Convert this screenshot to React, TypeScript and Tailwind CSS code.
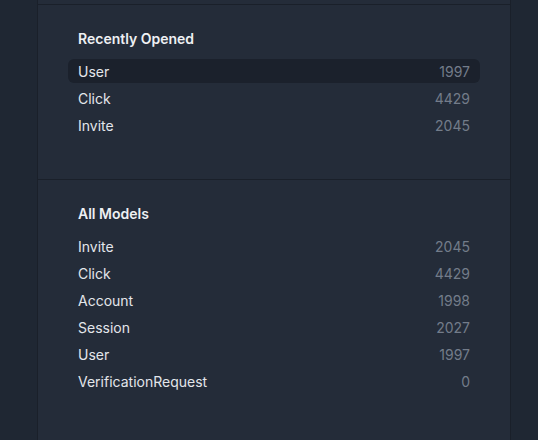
const recent = [
  { name: 'User', count: 1997 },
  { name: 'Click', count: 4429 },
  { name: 'Invite', count: 2045 },
];

const models = [
  { name: 'Invite', count: 2045 },
  { name: 'Click', count: 4429 },
  { name: 'Account', count: 1998 },
  { name: 'Session', count: 2027 },
  { name: 'User', count: 1997 },
  { name: 'VerificationRequest', count: 0 },
];

type Item = { name: string; count: number };

function ModelList({
  title,
  items,
  active,
}: {
  title: string;
  items: Item[];
  active?: number;
}) {
  return (
    <section className="px-[30px] pt-6">
      <h3 className="pl-[10px] text-[14px] leading-5 font-semibold text-[#eef0f3]">
        {title}
      </h3>
      <ul className="mt-[10px] flex flex-col gap-[3px]">
        {items.map((item, i) => (
          <li
            key={item.name}
            className={`flex h-6 items-center justify-between rounded-md px-[10px] text-[14px] ${
              i === active ? 'bg-[#1b212c]' : ''
            }`}
          >
            <span className="text-[#e3e6eb]">{item.name}</span>
            <span className="text-[#737c8a]">{item.count}</span>
          </li>
        ))}
      </ul>
    </section>
  );
}

export default function App() {
  return (
    <div
      className="flex h-[440px] w-[538px] overflow-hidden bg-[#1f2733]"
      style={{ fontFamily: 'Inter, "Noto Sans", sans-serif' }}
    >
      <div className="ml-[37px] h-full w-[474px] border-x border-[#1a202a] bg-[#242c39]">
        <div className="h-[5px] border-b border-[#1a202a]" />
        <div className="h-[175px] border-b border-[#1a202a]">
          <ModelList title="Recently Opened" items={recent} active={0} />
        </div>
        <ModelList title="All Models" items={models} />
      </div>
    </div>
  );
}
